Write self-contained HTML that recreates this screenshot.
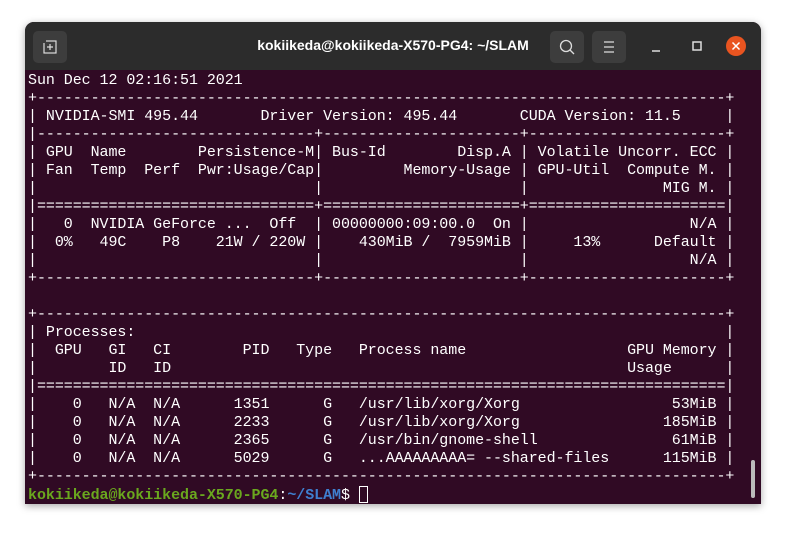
<!DOCTYPE html>
<html><head><style>
html,body{margin:0;padding:0;width:786px;height:533px;background:#fff;overflow:hidden}
.win{position:absolute;left:25px;top:22px;width:736px;height:482px;border-radius:9px 9px 0 0;overflow:hidden;box-shadow:0 2px 8px rgba(0,0,0,.35);background:#300a24}
.tb{position:absolute;left:0;top:0;width:736px;height:48px;background:#2c2c2c}
.btn{position:absolute;top:9px;width:34px;height:32px;background:#3d3d3d;border-radius:5px}
.title{position:absolute;left:0;width:736px;top:15px;text-align:center;color:#fff;font:bold 14px "Liberation Sans",sans-serif}
pre{position:absolute;left:3px;top:50px;margin:0;font:15px/18px "Liberation Mono",monospace;letter-spacing:-0.06px;color:#fff;white-space:pre}
.g{font-weight:bold;color:#6aa81e}.b{color:#3f7fd0;font-weight:bold}
</style></head><body>
<div class="win">
<div class="tb">
<div class="btn" style="left:8px"><svg width="34" height="32"><rect x="11" y="10" width="12" height="12" fill="none" stroke="#ddd" stroke-width="1.2"/><path d="M17 13v6M14 16h6" stroke="#ddd" stroke-width="1.2"/><rect x="10" y="9" width="3" height="3" fill="#3d3d3d"/></svg></div>
<div class="title">kokiikeda@kokiikeda-X570-PG4: ~/SLAM</div>
<div class="btn" style="left:525px"><svg width="34" height="32"><circle cx="16" cy="15" r="5.5" fill="none" stroke="#ddd" stroke-width="1.3"/><path d="M20 19l4 4" stroke="#ddd" stroke-width="1.3"/></svg></div>
<div class="btn" style="left:567px"><svg width="34" height="32"><path d="M12 11h10M12 16h10M12 21h10" stroke="#ddd" stroke-width="1.3"/></svg></div>
<svg style="position:absolute;left:620px;top:14px" width="110" height="22"><path d="M7 15h8" stroke="#ddd" stroke-width="1.5"/><rect x="48" y="6" width="8" height="8" fill="none" stroke="#ddd" stroke-width="1.5"/><circle cx="91" cy="10" r="10" fill="#e95420"/><path d="M87.5 6.5l7 7M94.5 6.5l-7 7" stroke="#fff" stroke-width="1.5"/></svg>
</div>
<pre>Sun Dec 12 02:16:51 2021
+-----------------------------------------------------------------------------+
| NVIDIA-SMI 495.44       Driver Version: 495.44       CUDA Version: 11.5     |
|-------------------------------+----------------------+----------------------+
| GPU  Name        Persistence-M| Bus-Id        Disp.A | Volatile Uncorr. ECC |
| Fan  Temp  Perf  Pwr:Usage/Cap|         Memory-Usage | GPU-Util  Compute M. |
|                               |                      |               MIG M. |
|===============================+======================+======================|
|   0  NVIDIA GeForce ...  Off  | 00000000:09:00.0  On |                  N/A |
|  0%   49C    P8    21W / 220W |    430MiB /  7959MiB |     13%      Default |
|                               |                      |                  N/A |
+-------------------------------+----------------------+----------------------+

+-----------------------------------------------------------------------------+
| Processes:                                                                  |
|  GPU   GI   CI        PID   Type   Process name                  GPU Memory |
|        ID   ID                                                   Usage      |
|=============================================================================|
|    0   N/A  N/A      1351      G   /usr/lib/xorg/Xorg                 53MiB |
|    0   N/A  N/A      2233      G   /usr/lib/xorg/Xorg                185MiB |
|    0   N/A  N/A      2365      G   /usr/bin/gnome-shell               61MiB |
|    0   N/A  N/A      5029      G   ...AAAAAAAAA= --shared-files      115MiB |
+-----------------------------------------------------------------------------+
<span class="g">kokiikeda@kokiikeda-X570-PG4</span>:<span class="b">~/SLAM</span>$ <span style="display:inline-block;width:9px;height:17px;border:1px solid #fff;box-sizing:border-box;vertical-align:-4px"></span></pre>
<div style="position:absolute;left:726px;top:438px;width:4px;height:38px;background:#bbb;border-radius:2px"></div>
</div>
</body></html>
